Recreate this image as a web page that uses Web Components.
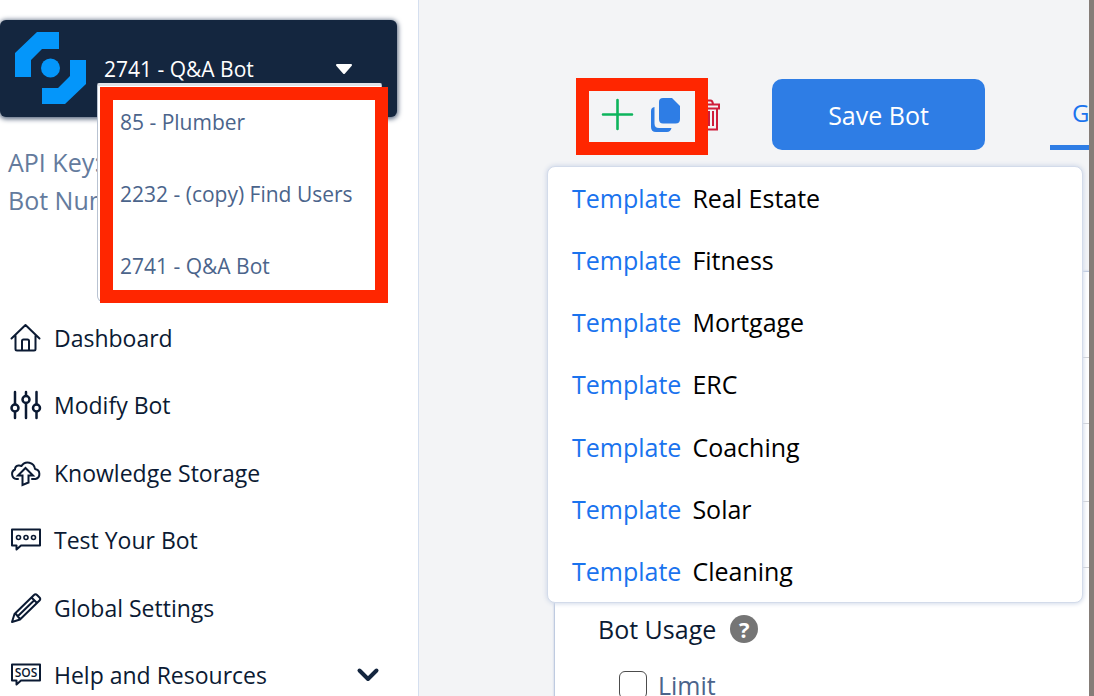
<!DOCTYPE html>
<html lang="en">
<head>
<meta charset="utf-8">
<meta name="viewport" content="width=device-width, initial-scale=1">
<title>Modify Bot</title>
<style>
  html, body { margin: 0; height: 100%; }
  body {
    font-family: "Open Sans", "Noto Sans", sans-serif;
    color: #0b1a33;
    overflow: hidden;
    --navy: #14263f;
    --blue: #2e7de5;
    --link: #1a73ee;
    --slate: #4b648b;
    --mark: #ff2600;
  }
</style>
</head>
<body>
<bot-app></bot-app>

<script>
const define = (name, html) => {
  const t = document.createElement('template');
  t.innerHTML = html;
  customElements.define(name, class extends HTMLElement {
    constructor() {
      super();
      this.attachShadow({ mode: 'open' }).append(t.content.cloneNode(true));
    }
  });
};

/* Red annotation frame laid over its positioned parent */
define('mark-frame', `
  <style>
    :host { display: block; position: absolute; box-sizing: border-box; border: 13px solid var(--mark); pointer-events: none; }
  </style>`);

/* Sidebar link: icon slot, label, optional trailing slot */
define('nav-item', `
  <style>
    :host { display: flex; flex: 1; align-items: center; }
    a { display: flex; flex: 1; align-items: center; gap: 12px; padding: 0 38px 0 10px; font-size: 23px; line-height: 32px; color: inherit; text-decoration: none; }
    .label { flex: 1; }
    ::slotted(svg) { display: block; flex: none; }
  </style>
  <a href="#"><slot name="icon"></slot><span class="label"><slot></slot></span><slot name="end"></slot></a>`);

define('bot-menu', `
  <style>
    :host { display: block; position: absolute; box-sizing: border-box; background: #fff; border: 1px solid #b9c3d2; border-top: 3px solid #dfe2e7; border-radius: 2px 2px 6px 6px; }
    ul { list-style: none; margin: 0; padding: 0; }
    button { display: block; width: 100%; height: 72px; padding: 0 22px; border: 0; background: none; font: inherit; font-size: 21px; color: var(--slate); text-align: left; white-space: nowrap; }
  </style>
  <ul>
    <li><button type="button">85 - Plumber</button></li>
    <li><button type="button">2232 - (copy) Find Users</button></li>
    <li><button type="button">2741 - Q&amp;A Bot</button></li>
  </ul>`);

define('bot-picker', `
  <style>
    :host { display: block; position: relative; z-index: 1; margin-right: 21px; height: 97px; background: var(--navy); border-radius: 6px; box-shadow: 0 1px 5px 1px #52617a; }
    .bar { display: flex; align-items: center; height: 97px; box-sizing: border-box; padding: 0 44px 0 14px; gap: 17px; }
    .logo { flex: none; display: block; }
    .field { flex: 1; display: grid; align-items: center; }
    select { grid-area: 1 / 1; width: 100%; height: 36px; appearance: none; border: 0; margin: 0; padding: 0; background: none; color: #fff; font: inherit; font-size: 21px; }
    .caret { grid-area: 1 / 1; justify-self: end; pointer-events: none; }
    bot-menu { left: 97px; top: 63px; width: 285px; height: 219px; }
    mark-frame { left: 100px; top: 67px; width: 288px; height: 216px; }
  </style>
  <div class="bar">
    <svg class="logo" width="73" height="73" viewBox="0 0 73 73" fill="#0496fa" aria-hidden="true">
      <path d="M1 45V21L23 0H45V17H28L17 28V45Z"/>
      <path d="M72 28V52L51 72H28V56H44L56 44V28Z"/>
      <circle cx="36.500" cy="36" r="9.500"/>
    </svg>
    <div class="field">
      <select aria-label="Current bot">
        <option>2741 - Q&amp;A Bot</option>
      </select>
      <svg class="caret" width="18" height="12" viewBox="0 0 18 12" aria-hidden="true"><path d="M2 2H16L9 10Z" fill="#fff" stroke="#fff" stroke-width="2" stroke-linejoin="round"/></svg>
    </div>
  </div>
  <bot-menu></bot-menu>
  <mark-frame></mark-frame>`);

define('side-bar', `
  <style>
    :host { display: block; flex: none; width: 418px; padding-top: 20px; background: #fff; border-right: 1px solid #d5dfef; }
    .account { margin: 0; padding: 26px 8px 0; height: 161px; font-size: 25px; line-height: 38px; color: #647b9d; }
    nav { display: flex; flex-direction: column; height: 405px; }
    .line { fill: none; stroke: #0b1a33; stroke-width: 2; stroke-linejoin: round; stroke-linecap: round; }
  </style>
  <bot-picker></bot-picker>
  <div class="account"><div>API Key:</div><div>Bot Num:</div></div>
  <nav aria-label="Main">
    <nav-item>
      <svg slot="icon" class="line" width="32" height="32" viewBox="0 0 32 32"><path d="M1.500 16.500L15.500 3L29.500 16.500M5.500 13.500V27Q5.500 28.500 7 28.500H24Q25.500 28.500 25.500 27V13.500M12 28.500V19Q12 17.500 13.500 17.500H17.500Q19 17.500 19 19V28.500"/></svg>
      Dashboard
    </nav-item>
    <nav-item>
      <svg slot="icon" class="line" width="32" height="32" viewBox="0 0 32 32" style="stroke-width:2.500"><path d="M5 3V15M5 23V29M16 3V6M16 14V29M26.500 3V15M26.500 23V29"/><circle cx="5" cy="19" r="3.500"/><circle cx="16" cy="10.500" r="3.500"/><circle cx="26.500" cy="19" r="3.500"/></svg>
      Modify Bot
    </nav-item>
    <nav-item>
      <svg slot="icon" class="line" width="32" height="32" viewBox="0 0 32 32"><path d="M8 22H6.500A5 5 0 0 1 5 12.500Q5 9 8.500 8.500Q10 8.300 11.500 9A7.300 7.300 0 0 1 25 12A5.100 5.100 0 0 1 25.500 22H22"/><path d="M15.500 11L23 18.500H18.500V25.500L12.500 28V18.500H8Z" stroke-linejoin="miter"/></svg>
      Knowledge Storage
    </nav-item>
    <nav-item>
      <svg slot="icon" class="line" width="32" height="32" viewBox="0 0 32 32"><path d="M2 5.500H30V21.500H11L6.500 25.500V21.500H2Z"/><g stroke-width="1.600"><circle cx="8.500" cy="13.500" r="2"/><circle cx="16" cy="13.500" r="2"/><circle cx="23.500" cy="13.500" r="2"/></g></svg>
      Test Your Bot
    </nav-item>
    <nav-item>
      <svg slot="icon" class="line" width="32" height="32" viewBox="0 0 32 32"><path d="M2 30L4.500 22L24 3Q25.500 1.500 27 3L29.500 5.500Q31 7 29.500 8.500L10 27.500ZM21.500 5.500L27 11M5.500 21.500L10 27M8 24L23.500 9"/></svg>
      Global Settings
    </nav-item>
    <nav-item>
      <svg slot="icon" class="line" width="32" height="32" viewBox="0 0 32 32"><path d="M2 5.500H30V21.500H11L6.500 25.500V21.500H2Z"/><text x="16" y="18" text-anchor="middle" font-family="Open Sans, sans-serif" font-size="12" font-weight="600" fill="#0b1a33" stroke="none">SOS</text></svg>
      Help and Resources
      <svg slot="end" class="line" width="24" height="16" viewBox="0 0 24 16" style="stroke-width:4;stroke:#14263f"><path d="M3.500 3.500L12 12L20.500 3.500"/></svg>
    </nav-item>
  </nav>`);

define('tool-bar', `
  <style>
    :host { display: flex; align-items: center; height: 71px; padding-left: 181px; }
    button { flex: none; display: block; border: 0; margin: 0; padding: 0; background: none; font: inherit; }
    svg { display: block; }
    .icons { position: relative; flex: none; display: flex; align-items: center; gap: 16px; width: 172px; }
    mark-frame { left: -24px; top: -20px; width: 132px; height: 77px; }
    .save { width: 213px; height: 71px; border-radius: 10px; background: var(--blue); color: #fff; font-size: 25px; }
    .tab { flex: none; align-self: stretch; box-sizing: border-box; margin-left: 65px; padding: 16px 22px 0; border-bottom: 5px solid var(--blue); font-size: 24px; line-height: 36px; color: var(--link); text-decoration: none; }
  </style>
  <div class="icons">
    <button type="button" aria-label="Add bot"><svg width="34" height="34" viewBox="0 0 34 34" fill="none" stroke="#0db45c" stroke-width="2.600" stroke-linecap="round"><path d="M17.500 2V31M3 16.500H32"/></svg></button>
    <button type="button" aria-label="Copy bot"><svg width="32" height="34" viewBox="0 0 32 34" fill="#2e7de5"><path d="M13 0H22L30 8V21Q30 25.500 25.500 25.500H13Q9 25.500 9 21V4Q9 0 13 0Z"/><path d="M4.500 9V25.500Q4.500 30 9 30H21.500Q20.500 34 17 34H6Q1 34 1 29V13Q1 9.500 4.500 9Z"/></svg></button>
    <button type="button" aria-label="Delete bot"><svg width="22" height="34" viewBox="0 0 22 34" fill="none" stroke="#cf1d3a" stroke-width="2"><path d="M1 6.500H21V10.500H1ZM3 10.500V31.500H19V10.500M7 6V4Q7 2.500 9 2.500H12.500Q14.500 2.500 15 6M7 13V28M11 13V28M15 13V28"/></svg></button>
    <mark-frame></mark-frame>
  </div>
  <button type="button" class="save">Save Bot</button>
  <a class="tab" href="#">General</a>`);

define('template-item', `
  <style>
    :host { display: flex; flex: 1; }
    a { display: flex; flex: 1; align-items: center; gap: 11px; padding: 0 24px; color: #000; text-decoration: none; font-size: 25px; line-height: 36px; }
    b { font-weight: 400; color: var(--link); }
  </style>
  <a href="#"><b>Template</b><span><slot></slot></span></a>`);

define('template-menu', `
  <style>
    :host { display: flex; flex-direction: column; position: absolute; box-sizing: border-box; background: #fff; border: 1px solid #d3dbea; border-radius: 8px; box-shadow: 0 0 4px 1px #d3dbea; }
  </style>
  <slot></slot>`);

define('bot-settings', `
  <style>
    :host { display: block; flex: 1; box-sizing: border-box; margin-left: 135px; background: #fff; border: 1px solid #bfcbe0; border-right: 0; border-bottom: 0; box-shadow: 0 0 2px #bfcbe0; }
    .row { box-sizing: border-box; height: 66px; border-bottom: 1px solid #d0d2d6; }
    .first { height: 86px; }
    .tall { height: 78px; }
    h2 { display: flex; align-items: center; gap: 14px; margin: 0; padding: 43px 0 0 43px; font-size: 25px; line-height: 36px; font-weight: 400; }
    .help { width: 28px; height: 28px; padding: 0; border: 0; border-radius: 50%; background: #757575; color: #fff; font: 700 22px/28px "Open Sans", sans-serif; text-align: center; }
    label { display: flex; align-items: center; gap: 11px; padding: 20px 0 0 64px; font-size: 25px; line-height: 36px; color: var(--slate); }
    input { appearance: none; box-sizing: border-box; width: 28px; height: 28px; margin: 0; border: 1px solid #4c4c4c; border-radius: 6px; background: #fff; }
  </style>
  <div class="row first"></div>
  <div class="row"></div>
  <div class="row tall"></div>
  <div class="row"></div>
  <h2>Bot Usage <button type="button" class="help" aria-label="About bot usage">?</button></h2>
  <label><input type="checkbox">Limit</label>`);

define('bot-app', `
  <style>
    :host { display: flex; height: 100%; overflow: hidden; }
    main { position: relative; flex: 1; min-width: 0; display: flex; flex-direction: column; box-sizing: border-box; padding-top: 79px; background: #f3f4f6; overflow: hidden; border-right: 5px solid #857d78; }
    bot-settings { margin-top: 121px; }
    template-menu { left: 128px; right: 6px; top: 166px; height: 437px; }
  </style>
  <side-bar></side-bar>
  <main>
    <tool-bar></tool-bar>
    <bot-settings></bot-settings>
    <template-menu>
      <template-item>Real Estate</template-item>
      <template-item>Fitness</template-item>
      <template-item>Mortgage</template-item>
      <template-item>ERC</template-item>
      <template-item>Coaching</template-item>
      <template-item>Solar</template-item>
      <template-item>Cleaning</template-item>
    </template-menu>
  </main>`);
</script>
</body>
</html>
